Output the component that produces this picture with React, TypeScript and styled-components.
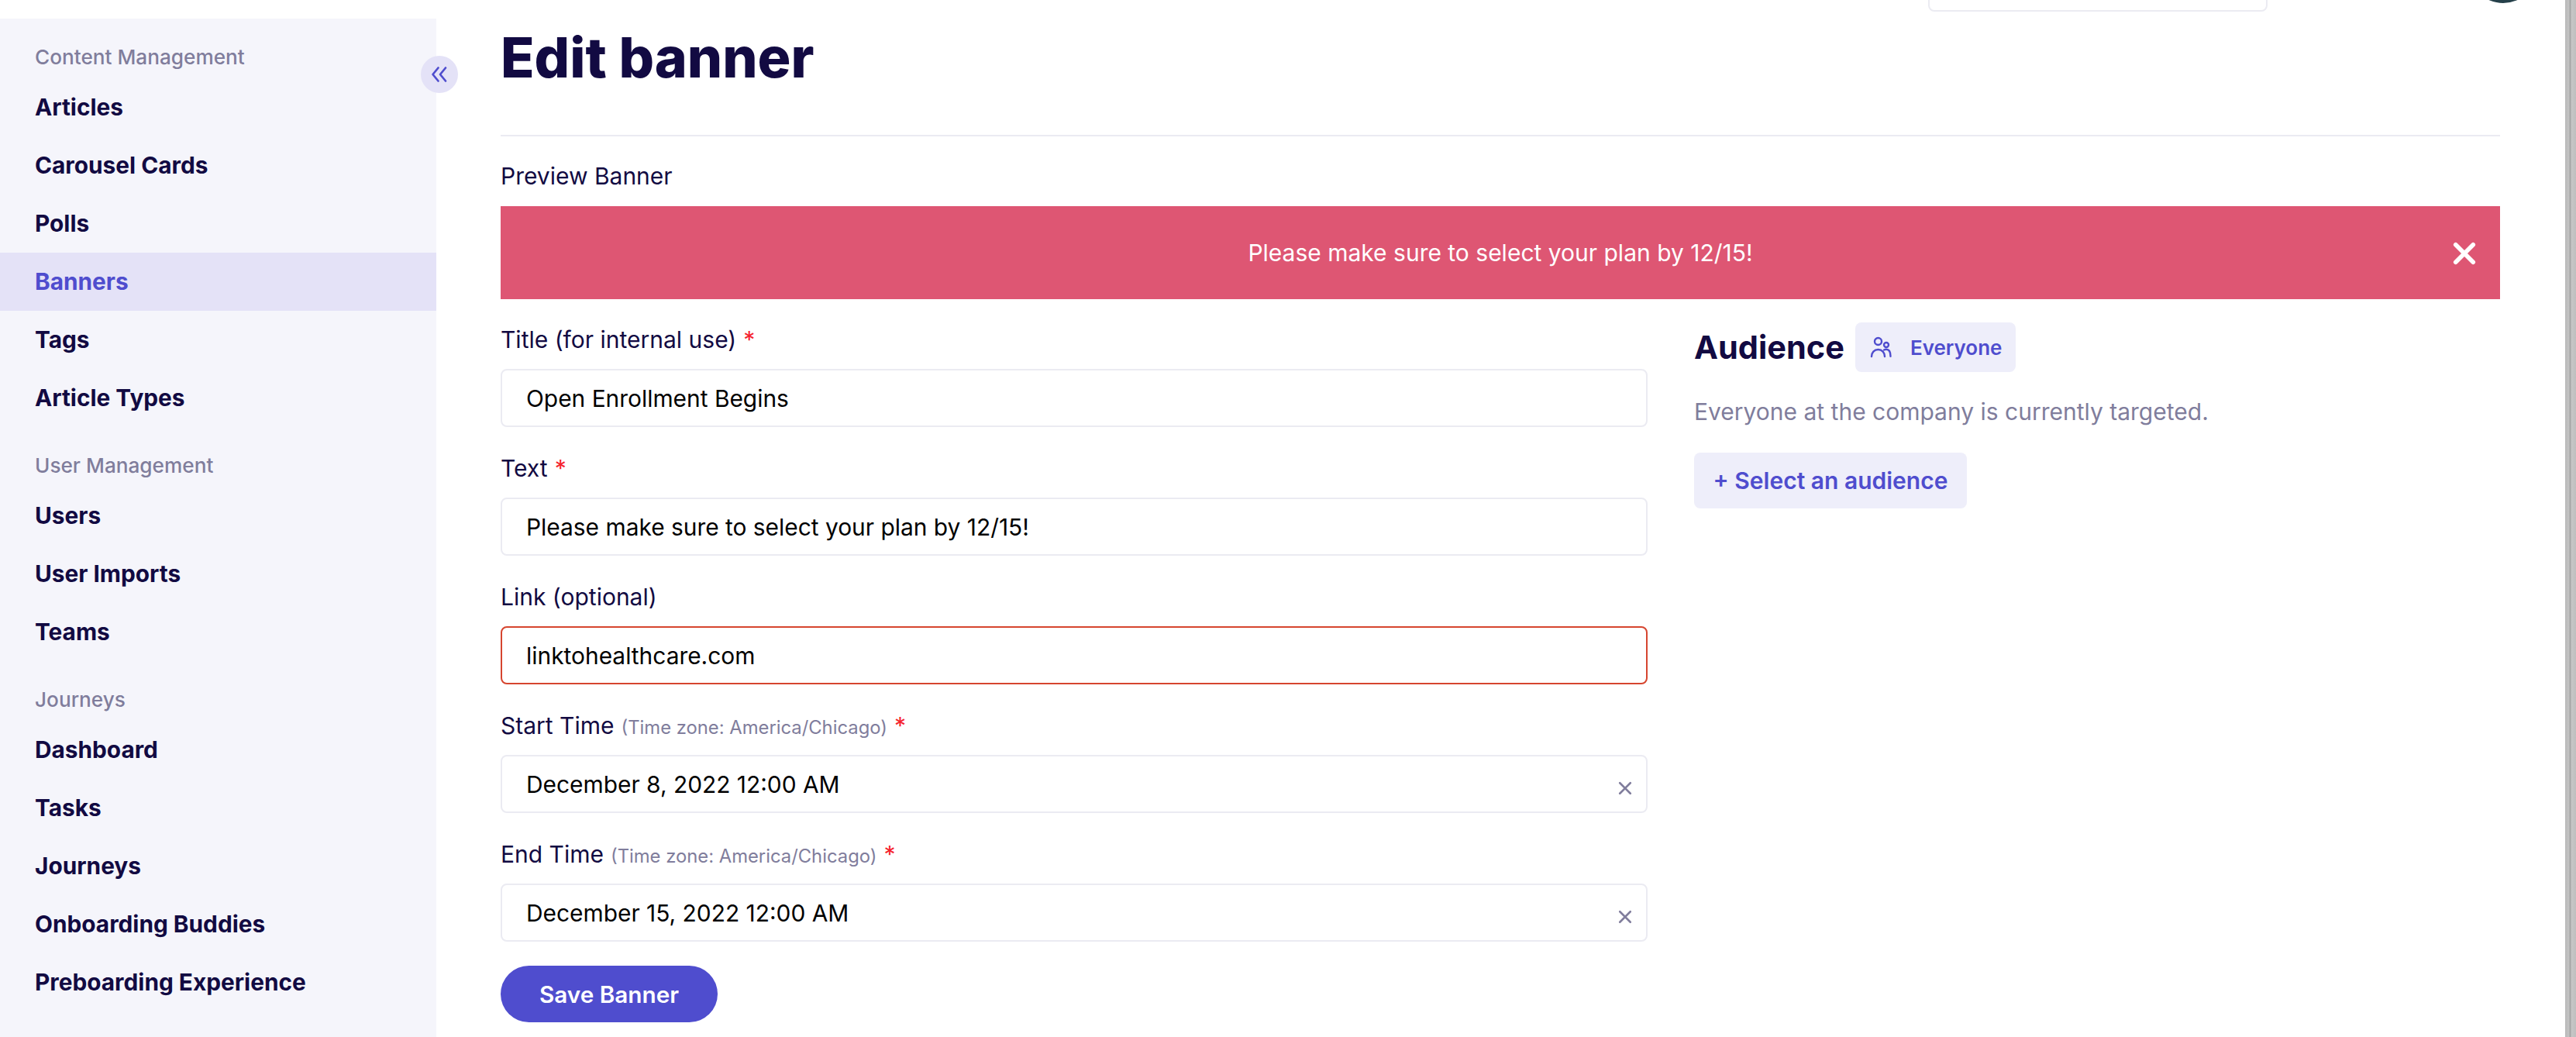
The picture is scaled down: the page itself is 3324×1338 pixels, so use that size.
import React from "react";
import styled, { createGlobalStyle } from "styled-components";

const Global = createGlobalStyle`
  html, body { margin: 0; padding: 0; background: #fff; overflow: hidden; }
  * { box-sizing: border-box; }
  body { font-family: Inter, "Liberation Sans", sans-serif; color: #120a42; }
`;

const Page = styled.div`
  display: flex;
  width: 3324px;
  height: 1338px;
  overflow: hidden;
`;

const Sidebar = styled.nav`
  position: relative;
  flex: 0 0 563px;
  margin-top: 24px;
  padding-top: 33px;
  background: #f5f5fb;
`;

const Collapse = styled.button`
  position: absolute;
  top: 48px;
  right: -28px;
  width: 48px;
  height: 48px;
  padding: 0;
  border: 0;
  border-radius: 50%;
  background: #e4e2f7;
  color: #4f4dce;
  display: flex;
  align-items: center;
  justify-content: center;
`;

const Section = styled.div`
  margin-bottom: 33px;
`;

const SectionLabel = styled.div`
  height: 44px;
  line-height: 34px;
  padding-left: 45px;
  font-size: 26.2px;
  font-weight: 500;
  color: #807d9c;
`;

const NavItem = styled.div<{ $active?: boolean }>`
  height: 75px;
  line-height: 75px;
  padding-left: 45px;
  font-size: 29.8px;
  font-weight: 650;
  color: ${(p) => (p.$active ? "#4f4dce" : "#120a42")};
  background: ${(p) => (p.$active ? "#e4e2f7" : "transparent")};
`;

const Content = styled.div`
  flex: 1;
  min-width: 0;
  display: flex;
  flex-direction: column;
`;

const TopBar = styled.div`
  flex: 0 0 15px;
  display: flex;
  justify-content: flex-end;
  align-items: flex-end;
  overflow: hidden;
  padding-right: 35px;
`;

const SearchBox = styled.div`
  flex: none;
  width: 438px;
  height: 40px;
  background: #fff;
  border: 2px solid #ebebf2;
  border-radius: 8px;
  margin-right: 259px;
`;

const Avatar = styled.div`
  flex: none;
  width: 90px;
  height: 90px;
  margin-bottom: 11px;
  border-radius: 50%;
  background: #25404a;
`;

const Main = styled.main`
  padding: 0 84px 0 83px;
`;

const Title = styled.h1`
  margin: 0;
  height: 161px;
  padding-top: 15px;
  font-size: 71.5px;
  line-height: 88px;
  font-weight: 800;
  color: #120a42;
  border-bottom: 2px solid #ebebf2;
`;

const PreviewLabel = styled.div`
  height: 90px;
  padding-top: 33px;
  font-size: 30px;
  line-height: 36px;
  font-weight: 400;
`;

const Banner = styled.div`
  position: relative;
  height: 120px;
  background: #de5673;
  color: #fff;
  font-size: 30px;
  font-weight: 400;
  display: flex;
  align-items: center;
  justify-content: center;
`;

const BannerClose = styled.span`
  position: absolute;
  right: 31px;
  top: 46px;
  display: flex;
`;

const Columns = styled.div`
  display: flex;
  gap: 60px;
`;

const FormColumn = styled.div`
  flex: 0 0 1480px;
  padding-top: 31px;
`;

const Field = styled.div`
  height: 166px;
`;

const Label = styled.div`
  height: 59px;
  font-size: 30px;
  line-height: 42px;
  white-space: nowrap;
`;

const Hint = styled.span`
  font-size: 23.8px;
  color: #807d9c;
  margin-left: 9px;
`;

const Req = styled.span`
  color: #f5222d;
  margin-left: 9px;
`;

const Input = styled.div<{ $error?: boolean }>`
  position: relative;
  height: 75px;
  padding-left: 31px;
  font-size: 29.9px;
  line-height: 72px;
  color: #000;
  background: #fff;
  border: 2px solid ${(p) => (p.$error ? "#d6452f" : "#ebebf2")};
  border-radius: 8px;
`;

const Clear = styled.span`
  position: absolute;
  right: 18px;
  top: 32px;
  display: flex;
  color: #807d9c;
`;

const Save = styled.button`
  display: block;
  width: 280px;
  height: 73px;
  margin-top: -1px;
  border: 0;
  border-radius: 37px;
  background: #4f4dce;
  color: #fff;
  font-family: inherit;
  font-size: 29.7px;
  font-weight: 600;
`;

const Audience = styled.aside`
  flex: 1;
  padding-top: 30px;
`;

const AudienceHead = styled.div`
  display: flex;
  align-items: center;
  gap: 14px;
`;

const AudienceTitle = styled.h2`
  margin: 0;
  font-size: 41.5px;
  line-height: 64px;
  font-weight: 650;
`;

const Chip = styled.div`
  display: flex;
  align-items: center;
  height: 64px;
  padding: 0 17px 0 19px;
  gap: 24px;
  border-radius: 8px;
  background: #eeeefa;
  color: #4f4dce;
  font-size: 26px;
  font-weight: 600;
`;

const Desc = styled.p`
  margin: 33px 0 0;
  font-size: 30px;
  line-height: 36px;
  color: #807d9c;
`;

const SelectButton = styled.button`
  display: block;
  width: 352px;
  height: 72px;
  margin-top: 35px;
  padding: 0;
  border: 0;
  border-radius: 8px;
  background: #eeeefa;
  color: #4f4dce;
  font-family: inherit;
  font-size: 30px;
  font-weight: 600;
`;

const Scrollbar = styled.div`
  flex: 0 0 14px;
  background: linear-gradient(90deg, #b9b9b9 0, #c4c4c4 5px, #a6a6a6 6px, #a6a6a6 7px, #c6c6c6 8px, #bfbfbf 14px);
`;

const CloseIcon = ({ size, width }: { size: number; width: number }) => (
  <svg width={size} height={size} viewBox="0 0 24 24" fill="none" stroke="currentColor" strokeWidth={width} strokeLinecap="round">
    <path d="M3 3 21 21M21 3 3 21" />
  </svg>
);

const PeopleIcon = () => (
  <svg width="28" height="28" viewBox="0 0 28 28" fill="none" stroke="currentColor" strokeWidth="2.4" strokeLinecap="round">
    <circle cx="10.5" cy="6.5" r="4.5" />
    <circle cx="21" cy="11" r="3" />
    <path d="M2 26c0-5 3.5-9 8.5-9s8.5 4 8.5 9" />
    <path d="M18 17.5c1-.5 2-.8 3-.8 3.5 0 5.5 3.5 5.5 9" />
  </svg>
);

const navGroups: { label: string; items: string[] }[] = [
  { label: "Content Management", items: ["Articles", "Carousel Cards", "Polls", "Banners", "Tags", "Article Types"] },
  { label: "User Management", items: ["Users", "User Imports", "Teams"] },
  { label: "Journeys", items: ["Dashboard", "Tasks", "Journeys", "Onboarding Buddies", "Preboarding Experience"] },
];

const fields: { label: string; hint?: string; required?: boolean; value: string; error?: boolean; clear?: boolean }[] = [
  { label: "Title (for internal use)", required: true, value: "Open Enrollment Begins" },
  { label: "Text", required: true, value: "Please make sure to select your plan by 12/15!" },
  { label: "Link (optional)", value: "linktohealthcare.com", error: true },
  { label: "Start Time", hint: "(Time zone: America/Chicago)", required: true, value: "December 8, 2022 12:00 AM", clear: true },
  { label: "End Time", hint: "(Time zone: America/Chicago)", required: true, value: "December 15, 2022 12:00 AM", clear: true },
];

export default function App() {
  return (
    <Page>
      <Global />
      <Sidebar>
        <Collapse aria-label="Collapse">
          <svg width="24" height="24" viewBox="0 0 24 24" fill="none" stroke="currentColor" strokeWidth="2.7" strokeLinecap="round" strokeLinejoin="round">
            <path d="M10.5 3.5 3.5 12 10.5 20.5" />
            <path d="M20 3.5 13 12 20 20.5" />
          </svg>
        </Collapse>
        {navGroups.map((g) => (
          <Section key={g.label}>
            <SectionLabel>{g.label}</SectionLabel>
            {g.items.map((i) => (
              <NavItem key={i} $active={i === "Banners"}>{i}</NavItem>
            ))}
          </Section>
        ))}
      </Sidebar>
      <Content>
        <TopBar>
          <SearchBox />
          <Avatar />
        </TopBar>
        <Main>
          <Title>Edit banner</Title>
          <PreviewLabel>Preview Banner</PreviewLabel>
          <Banner>
            Please make sure to select your plan by 12/15!
            <BannerClose><CloseIcon size={30} width={4.5} /></BannerClose>
          </Banner>
          <Columns>
            <FormColumn>
              {fields.map((f) => (
                <Field key={f.label}>
                  <Label>
                    {f.label}
                    {f.hint && <Hint>{f.hint}</Hint>}
                    {f.required && <Req>*</Req>}
                  </Label>
                  <Input $error={f.error}>
                    {f.value}
                    {f.clear && <Clear><CloseIcon size={18} width={3.5} /></Clear>}
                  </Input>
                </Field>
              ))}
              <Save>Save Banner</Save>
            </FormColumn>
            <Audience>
              <AudienceHead>
                <AudienceTitle>Audience</AudienceTitle>
                <Chip><PeopleIcon />Everyone</Chip>
              </AudienceHead>
              <Desc>Everyone at the company is currently targeted.</Desc>
              <SelectButton>+ Select an audience</SelectButton>
            </Audience>
          </Columns>
        </Main>
      </Content>
      <Scrollbar />
    </Page>
  );
}
